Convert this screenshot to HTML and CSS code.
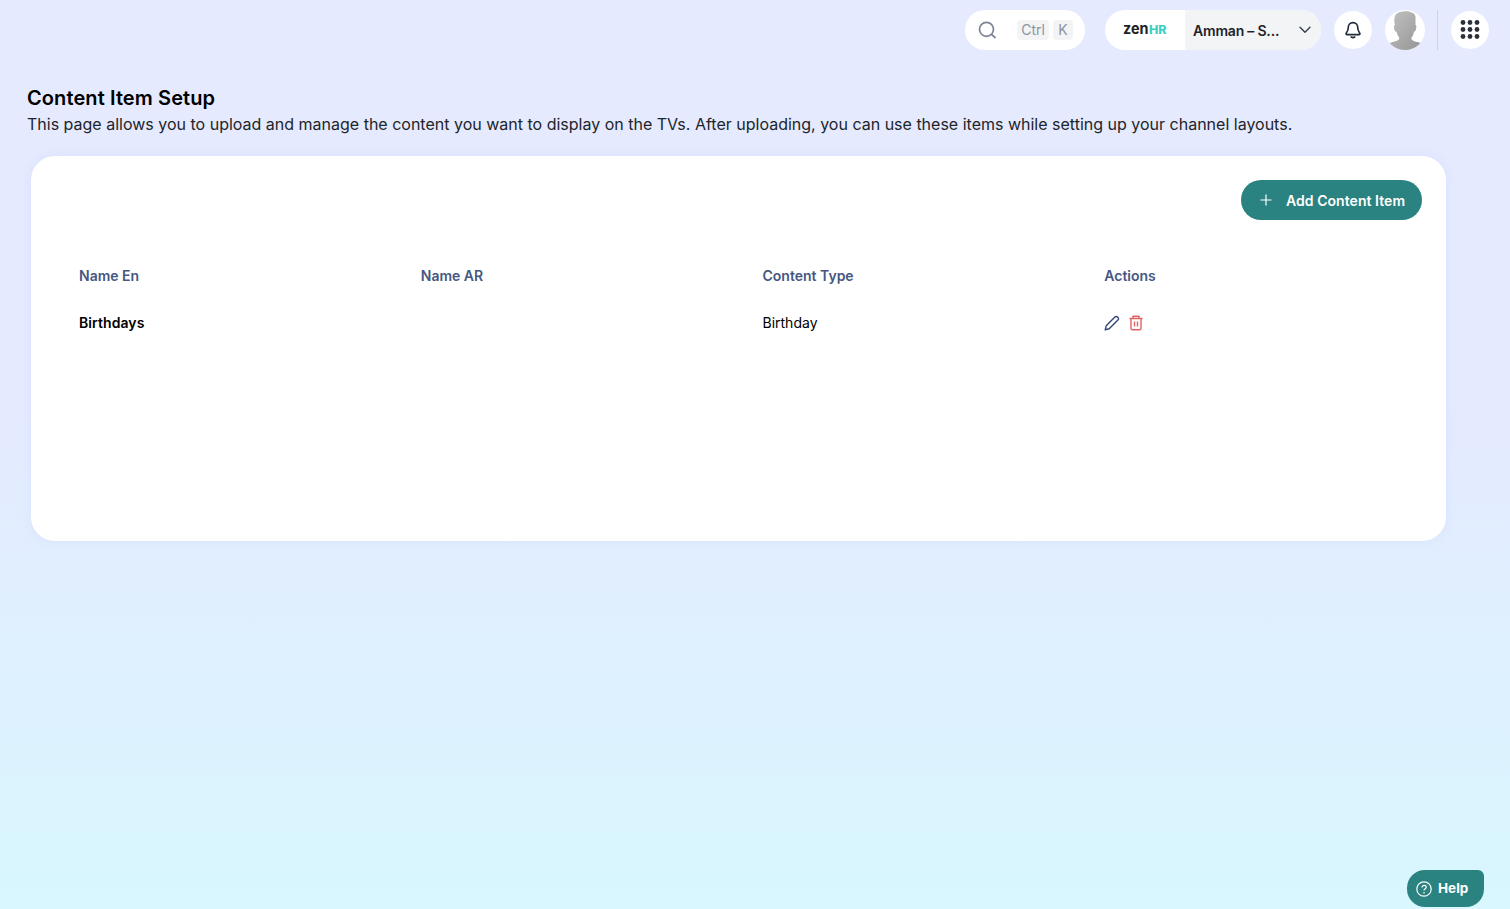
FILE: index.html
```html
<!DOCTYPE html>
<html lang="en">
  <head>
    <meta charset="UTF-8" />
    <meta name="viewport" content="width=device-width, initial-scale=1.0" />
    <title>Content Item Setup</title>

    <link rel="stylesheet" href="styles.css" />
  </head>

  <body>
    <!-- Top bar -->
    <header class="topbar">
      <div class="search">
        <svg class="search-icon" width="20" height="20" viewBox="0 0 20 20">
          <circle cx="8.5" cy="9.3" r="7" />
          <path d="M13.500 14.300 17 17.500" />
        </svg>
        <kbd class="key key-ctrl">Ctrl</kbd>
        <kbd class="key key-k">K</kbd>
      </div>

      <div class="company">
        <div class="logo">
          <svg width="50" height="24" viewBox="0 0 50 24">
            <text class="logo-zen" x="0" y="16" textLength="25.5" lengthAdjust="spacingAndGlyphs">zen</text>
            <text class="logo-hr" x="26" y="16" textLength="17.5" lengthAdjust="spacingAndGlyphs">HR</text>
          </svg>
        </div>
        <div class="branch">
          <span class="branch-name">Amman – S...</span>
          <svg class="chevron" width="12" height="8" viewBox="0 0 12 8">
            <path d="M1 1.2 6 6.2 11 1.2" />
          </svg>
        </div>
      </div>

      <button class="round-button bell">
        <svg width="20" height="20" viewBox="0 0 20 20">
          <path class="bell-line" d="M10 2.6c-2.9 0-4.7 2.1-4.7 4.7 0 3.2-1 4.3-2 5.7-.5.7-.2 1.6.8 1.6h11.800c1 0 1.300-.9.8-1.600-1-1.400-2-2.500-2-5.700 0-2.600-1.800-4.700-4.700-4.700z" />
          <path class="bell-line" d="M8.200 17q1.800 1.200 3.600 0" />
        </svg>
      </button>

      <div class="avatar">
        <svg width="40" height="40" viewBox="0 0 40 40">
          <defs>
            <linearGradient id="person" x1="0" y1="0" x2="1" y2="1">
              <stop offset="0" stop-color="#c2c2c2" />
              <stop offset="1" stop-color="#949494" />
            </linearGradient>
          </defs>
          <path
            fill="url(#person)"
            d="M10 6C11 3 15 1.500 20 1.300c3 0 5 .5 6.500 1.200C30 3.500 31 6 30.500 10v5c1.200 0 1 2.500.5 4-.4 1.700-1 2.700-2 2.800-.5 2.700-1.500 4.700-2.500 5.700-.4 2.500 1 3 3.500 4 3 1 5.500 1 7 2.500V40H4v-6.500c3-2 6-1.500 8.500-3 1.500-.7 2-1.500 1.500-3.500-1.200-1.200-2-3-2.500-5.200-1.500 0-2-1.300-2.300-3.300-.3-2-.3-3.500.8-3.500C9 12 9 9 10 6z"
          />
        </svg>
      </div>

      <div class="divider"></div>

      <button class="round-button apps">
        <svg width="20" height="20" viewBox="0 0 20 20">
          <circle cx="3" cy="2.500" r="2.400" />
          <circle cx="10" cy="2.500" r="2.400" />
          <circle cx="17" cy="2.500" r="2.400" />
          <circle cx="3" cy="9.500" r="2.400" />
          <circle cx="10" cy="9.500" r="2.400" />
          <circle cx="17" cy="9.500" r="2.400" />
          <circle cx="3" cy="16.500" r="2.400" />
          <circle cx="10" cy="16.500" r="2.400" />
          <circle cx="17" cy="16.500" r="2.400" />
        </svg>
      </button>
    </header>

    <!-- Content items -->
    <main class="page">
      <h1 class="title">Content Item Setup</h1>
      <p class="description">
        This page allows you to upload and manage the content you want to
        display on the TVs. After uploading, you can use these items while
        setting up your channel layouts.
      </p>

      <section class="card">
        <button class="add-button">
          <svg width="12" height="12" viewBox="0 0 12 12">
            <path d="M6 .5v11M.5 6h11" />
          </svg>
          <span>Add Content Item</span>
        </button>

        <table class="items">
          <thead>
            <tr>
              <th>Name En</th>
              <th>Name AR</th>
              <th>Content Type</th>
              <th>Actions</th>
            </tr>
          </thead>
          <tbody>
            <tr>
              <td class="name">Birthdays</td>
              <td></td>
              <td>Birthday</td>
              <td>
                <div class="actions">
                  <svg class="edit" width="16" height="16" viewBox="0 0 16 16">
                    <path d="M1.200 14.800 2.200 10.800 10.900 2.100Q12.300.7 13.800 2.200 15.300 3.700 13.900 5.100L5.200 13.800z" />
                  </svg>
                  <svg class="delete" width="16" height="16" viewBox="0 0 16 16">
                    <path d="M1.500 3.500h13M5 3.500V1.200h6v2.300M3 3.500v9.800q0 1.500 1.500 1.500h7q1.500 0 1.500-1.500V3.500M6.500 6.500v5M9.500 6.500v5" />
                  </svg>
                </div>
              </td>
            </tr>
          </tbody>
        </table>
      </section>
    </main>

    <!-- Help -->
    <button class="help">
      <svg width="16" height="16" viewBox="0 0 16 16">
        <circle cx="8" cy="8" r="7.200" />
        <path d="M6 6.500C6 3.500 10.300 3.700 10.200 6.300 10.100 7.700 8 7.700 8 9.500M8 11v1.400" />
      </svg>
      <span>Help</span>
    </button>
  </body>
</html>
```

FILE: styles.css
```css
* {
  box-sizing: border-box;
}

body {
  margin: 0;
  height: 909px;
  overflow: hidden;
  font-family: Inter, "Liberation Sans", sans-serif;
  font-size: 14px;
  color: #000;
  background: linear-gradient(180deg, #e5eaff 0%, #e5eaff 45%, #d8f7fe 100%);
}

button {
  font-family: inherit;
  border: none;
  padding: 0;
}

svg {
  display: block;
  flex-shrink: 0;
}

/* Top bar */
.topbar {
  display: flex;
  justify-content: flex-end;
  align-items: center;
  height: 60px;
  padding-right: 21px;
}

.search {
  display: flex;
  align-items: center;
  width: 120px;
  height: 40px;
  margin-right: 20px;
  padding-left: 13px;
  border-radius: 20px;
  background: #fff;
}

.search-icon {
  margin-right: 19px;
  fill: none;
  stroke: #7c8493;
  stroke-width: 1.7;
  stroke-linecap: round;
}

.key {
  height: 20px;
  border-radius: 4px;
  background: #f3f4f6;
  color: #8c929e;
  font-family: inherit;
  font-size: 14px;
  line-height: 20px;
  text-align: center;
}

.key-ctrl {
  width: 32px;
  margin-right: 4px;
}

.key-k {
  width: 20px;
}

.company {
  display: flex;
  width: 216px;
  height: 40px;
  margin-right: 13px;
  border-radius: 20px;
  overflow: hidden;
  background: #fff;
}

.logo {
  display: flex;
  align-items: center;
  width: 80px;
  padding-left: 18px;
}

.logo-zen {
  font-size: 15px;
  font-weight: 700;
  fill: #222;
}

.logo-hr {
  font-size: 11.5px;
  font-weight: 800;
  fill: #3bcfc5;
}

.branch {
  display: flex;
  flex: 1;
  justify-content: space-between;
  align-items: center;
  padding: 0 10px 0 8px;
  background: #f3f4f6;
}

.branch-name {
  padding-top: 1px;
  color: #1f2329;
  font-weight: 600;
  letter-spacing: -0.2px;
}

.chevron {
  fill: none;
  stroke: #374151;
  stroke-width: 1.4;
  stroke-linecap: round;
}

.round-button {
  display: flex;
  justify-content: center;
  align-items: center;
  width: 38px;
  height: 38px;
  border-radius: 50%;
  background: #fff;
}

.bell {
  margin-right: 13px;
}

.bell-line {
  fill: none;
  stroke: #1f2937;
  stroke-width: 1.6;
  stroke-linecap: round;
  stroke-linejoin: round;
}

.avatar {
  width: 40px;
  height: 40px;
  border-radius: 50%;
  overflow: hidden;
  background: #fff;
}

.divider {
  width: 1px;
  height: 40px;
  margin: 0 13px 0 12px;
  background: #cdd2e4;
}

.apps {
  fill: #2b303b;
}

/* Content items */
.page {
  padding: 26px 64px 0 27px;
}

.title {
  margin: 0;
  font-size: 20px;
  font-weight: 600;
  line-height: 24px;
  letter-spacing: 0.1px;
}

.description {
  margin: 2px 0 20px;
  color: #212529;
  font-size: 16px;
  line-height: 24px;
}

.card {
  display: flex;
  flex-direction: column;
  height: 385px;
  margin-left: 4px;
  padding: 24px;
  border-radius: 24px;
  background: #fff;
  box-shadow: 0 0 10px rgba(190, 205, 245, 0.3);
}

.add-button {
  display: flex;
  align-items: center;
  align-self: flex-end;
  gap: 14px;
  width: 181px;
  height: 40px;
  padding-left: 19px;
  border-radius: 20px;
  background: #2a8380;
  color: #fff;
  font-size: 14px;
  font-weight: 600;
  letter-spacing: 0.05px;
}

.add-button path {
  stroke: #fff;
  stroke-width: 1.2;
}

.items {
  width: 100%;
  margin-top: 32px;
  border-collapse: collapse;
  table-layout: fixed;
}

.items th,
.items td {
  height: 47px;
  padding: 0 24px;
  text-align: left;
  vertical-align: middle;
}

.items th {
  color: #465781;
  font-weight: 600;
}

.items .name {
  font-weight: 600;
  letter-spacing: 0.08px;
}

.actions {
  display: flex;
  gap: 8px;
}

.edit,
.delete {
  fill: none;
  stroke-width: 1.4;
  stroke-linejoin: round;
}

.edit {
  stroke: #354675;
}

.delete {
  stroke: #df6464;
}

/* Help */
.help {
  position: fixed;
  right: 26px;
  bottom: 2px;
  display: flex;
  align-items: center;
  gap: 6px;
  width: 77px;
  height: 37px;
  padding-left: 9px;
  border-radius: 18px 6px 18px 18px;
  background: #2a8380;
  color: #fff;
  font-size: 13.5px;
  font-weight: 700;
}

.help span {
  padding-bottom: 1px;
}

.help svg {
  fill: none;
  stroke: #fff;
  stroke-width: 1.2;
}
```
